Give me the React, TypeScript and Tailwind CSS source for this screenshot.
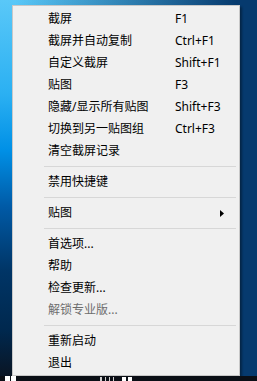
import React from "react";

type Item =
  | { kind: "item"; label: string; shortcut?: string; disabled?: boolean; submenu?: boolean }
  | { kind: "sep" };

const items: Item[] = [
  { kind: "item", label: "截屏", shortcut: "F1" },
  { kind: "item", label: "截屏并自动复制", shortcut: "Ctrl+F1" },
  { kind: "item", label: "自定义截屏", shortcut: "Shift+F1" },
  { kind: "item", label: "贴图", shortcut: "F3" },
  { kind: "item", label: "隐藏/显示所有贴图", shortcut: "Shift+F3" },
  { kind: "item", label: "切换到另一贴图组", shortcut: "Ctrl+F3" },
  { kind: "item", label: "清空截屏记录" },
  { kind: "sep" },
  { kind: "item", label: "禁用快捷键" },
  { kind: "sep" },
  { kind: "item", label: "贴图", submenu: true },
  { kind: "sep" },
  { kind: "item", label: "首选项..." },
  { kind: "item", label: "帮助" },
  { kind: "item", label: "检查更新..." },
  { kind: "item", label: "解锁专业版...", disabled: true },
  { kind: "sep" },
  { kind: "item", label: "重新启动" },
  { kind: "item", label: "退出" },
];

const MenuRow = ({ item }: { item: Item }) => {
  if (item.kind === "sep") {
    return (
      <div className="flex h-[9px] items-center pl-[31px] pr-[3px]">
        <div className="h-px w-full bg-[#d7d7d7]" />
      </div>
    );
  }
  return (
    <div
      className={`flex h-[22px] items-center pl-[35px] pr-[14px] ${
        item.disabled ? "text-[#6d6d6d]" : "text-black"
      }`}
    >
      <span className="w-[127px] whitespace-nowrap">{item.label}</span>
      <span className="flex-1 whitespace-nowrap">{item.shortcut}</span>
      {item.submenu && (
        <svg width="4" height="7" viewBox="0 0 4 7" className="mr-[1px]">
          <path d="M0 0 L4 3.5 L0 7 Z" fill="#000" />
        </svg>
      )}
    </div>
  );
};

export default function App() {
  return (
    <div
      className="flex h-[381px] w-[257px] flex-col overflow-hidden"
      style={{ fontFamily: '"Noto Sans", "Noto Sans CJK SC", sans-serif' }}
    >
      <div className="flex-1 bg-[linear-gradient(to_right,rgba(6,58,110,0)_0%,rgba(6,58,110,0)_6%,#063a6e_92%),linear-gradient(to_bottom,#5ac8f8_0%,#2bb0f2_25%,#0090e6_40%,#005aa6_55%,#003566_72%,#00284e_88%,#0a1524_100%)] pl-[12px] pt-[5px]">
        <div className="w-[228px] border border-[#c8c8c8] bg-[#f0f0f0] pb-[1px] pt-[2px] text-[12px] leading-none shadow-[2px_2px_2px_rgba(0,0,0,0.35)]">
          {items.map((item, i) => (
            <MenuRow key={i} item={item} />
          ))}
        </div>
      </div>
      <div className="flex h-[5px] items-start bg-[#0b0f16]">
        <div className="ml-[5px] flex gap-[1px]">
          <span className="h-[5px] w-[5px] bg-white" />
          <span className="h-[5px] w-[5px] bg-white" />
        </div>
        <div className="ml-[84px] flex gap-[3px] pt-[1px]">
          <span className="h-[4px] w-[2px] bg-[#d0d0d0]" />
          <span className="h-[4px] w-[1px] bg-[#d0d0d0]" />
          <span className="h-[4px] w-[1px] bg-[#d0d0d0]" />
          <span className="h-[4px] w-[1px] bg-[#d0d0d0]" />
        </div>
        <div className="ml-[8px] flex gap-[2px] pt-[1px]">
          <span className="h-[4px] w-[4px] bg-white" />
          <span className="h-[4px] w-[4px] bg-white" />
        </div>
      </div>
    </div>
  );
}
